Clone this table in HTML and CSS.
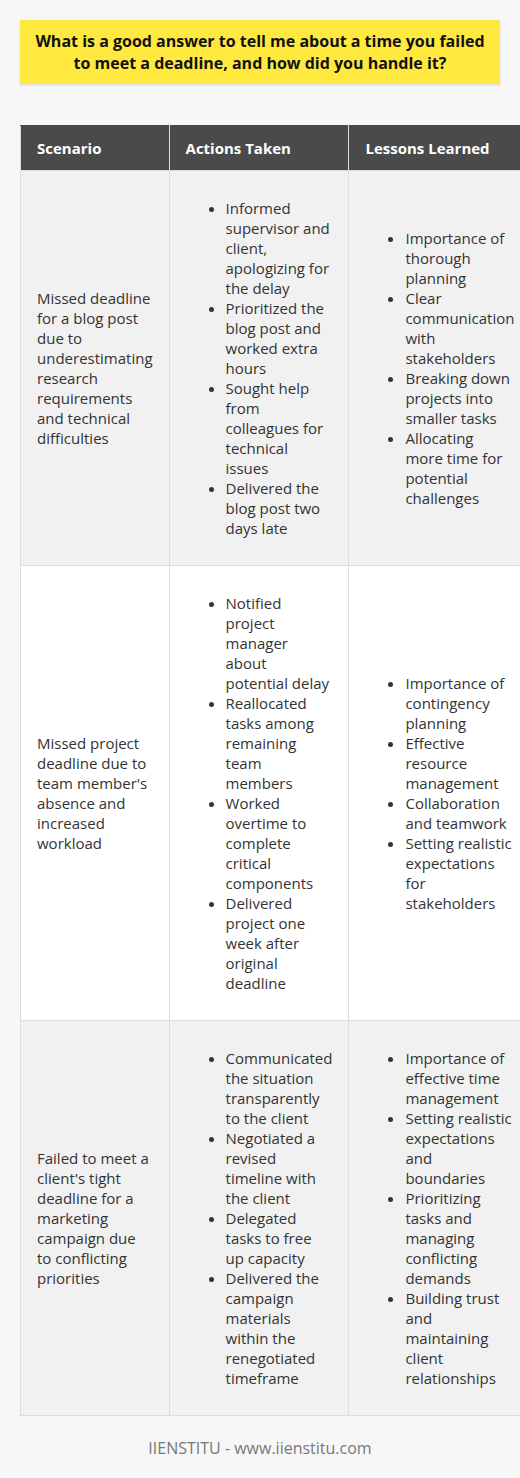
FILE: index.html
```html
<!DOCTYPE html>
<html lang="en">
<head>
<meta charset="utf-8">
<title>Failed deadline answer</title>
<link rel="stylesheet" href="styles.css">
</head>
<body>
<div class="page">
  <h1 class="title">What is a good answer to tell me about a time you failed to meet a deadline, and how did you handle it?</h1>
  <table class="grid">
    <thead>
      <tr><th>Scenario</th><th>Actions Taken</th><th>Lessons Learned</th></tr>
    </thead>
    <tbody>
      <tr class="odd">
        <td>Missed deadline for a blog post due to underestimating research requirements and technical difficulties</td>
        <td><ul>
          <li>Informed supervisor and client, apologizing for the delay</li>
          <li>Prioritized the blog post and worked extra hours</li>
          <li>Sought help from colleagues for technical issues</li>
          <li>Delivered the blog post two days late</li>
        </ul></td>
        <td><ul>
          <li>Importance of thorough planning</li>
          <li>Clear communication with stakeholders</li>
          <li>Breaking down projects into smaller tasks</li>
          <li>Allocating more time for potential challenges</li>
        </ul></td>
      </tr>
      <tr class="even">
        <td>Missed project deadline due to team member's absence and increased workload</td>
        <td><ul>
          <li>Notified project manager about potential delay</li>
          <li>Reallocated tasks among remaining team members</li>
          <li>Worked overtime to complete critical components</li>
          <li>Delivered project one week after original deadline</li>
        </ul></td>
        <td><ul>
          <li>Importance of contingency planning</li>
          <li>Effective resource management</li>
          <li>Collaboration and teamwork</li>
          <li>Setting realistic expectations for stakeholders</li>
        </ul></td>
      </tr>
      <tr class="odd">
        <td>Failed to meet a client's tight deadline for a marketing campaign due to conflicting priorities</td>
        <td><ul>
          <li>Communicated the situation transparently to the client</li>
          <li>Negotiated a revised timeline with the client</li>
          <li>Delegated tasks to free up capacity</li>
          <li>Delivered the campaign materials within the renegotiated timeframe</li>
        </ul></td>
        <td><ul>
          <li>Importance of effective time management</li>
          <li>Setting realistic expectations and boundaries</li>
          <li>Prioritizing tasks and managing conflicting demands</li>
          <li>Building trust and maintaining client relationships</li>
        </ul></td>
      </tr>
    </tbody>
  </table>
  <p class="footer">IIENSTITU - www.iienstitu.com</p>
</div>
</body>
</html>
```
FILE: styles.css
```css
html, body {
  margin: 0;
  padding: 0;
  background: #f7f7f7;
}
body {
  font-family: "Open Sans", "DejaVu Sans", sans-serif;
  color: #333;
  font-size: 15px;
  line-height: 20px;
}
.page {
  width: 480px;
  padding: 20px 20px 21px;
}
.title {
  margin: 0;
  background: #ffe93f;
  padding: 10px 8px;
  text-align: center;
  font-size: 16px;
  line-height: 22px;
  font-weight: 700;
  color: #111;
  box-shadow: 0 1px 3px rgba(0,0,0,0.12);
}
.grid {
  margin-top: 41px;
  width: 100%;
  border-collapse: collapse;
}
.grid th {
  background: #4a4a4a;
  color: #fff;
  text-align: left;
  font-size: 15px;
  font-weight: 700;
  padding: 12px 16px;
  border: 1px solid #ddd;
  border-top-color: #4a4a4a;
}
.grid td {
  padding: 16px;
  border: 1px solid #ddd;
  vertical-align: middle;
}
.grid tr.odd td {
  background: #f1f1f1;
}
.grid tr.even td {
  background: #fff;
}
.grid ul {
  margin: 11px 0;
  padding-left: 40px;
}
.footer {
  margin: 22px 0 0;
  text-align: center;
  color: #777;
  font-size: 16px;
}
```
